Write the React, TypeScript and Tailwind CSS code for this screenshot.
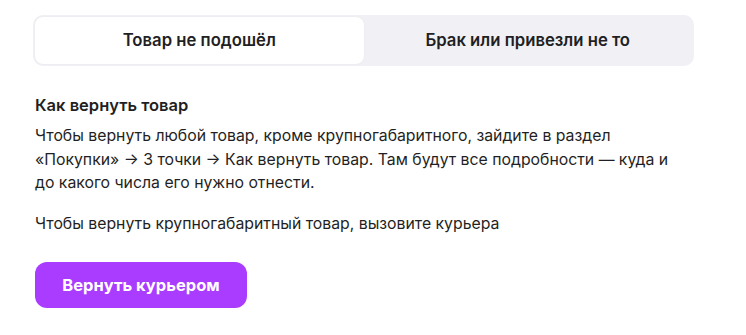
export default function App() {
  return (
    <div className="min-h-[335px] bg-white pt-[15px] pl-[33px] font-['Inter',sans-serif] text-[#1f1f24]">
      <div className="w-[661px]">
        {/* Tabs */}
        <div className="flex rounded-[10px] bg-[#f0f0f5] p-[2px]">
          <button className="h-[47px] flex-1 rounded-[8px] bg-white text-[16.7px] font-semibold shadow-[0_0_2px_rgba(0,0,0,0.06)]">
            Товар не подошёл
          </button>
          <button className="h-[47px] flex-1 rounded-[8px] text-[16.7px] font-semibold">
            Брак или привезли не то
          </button>
        </div>

        <div className="pl-[2px] pt-[28px]">
          <h3 className="text-[16.5px] font-semibold leading-[22px]">Как вернуть товар</h3>
          <p className="mt-[8px] text-[15.8px] leading-[23.5px]">
            Чтобы вернуть любой товар, кроме крупногабаритного, зайдите в раздел
            <br />
            «Покупки» → 3 точки → Как вернуть товар. Там будут все подробности — куда и
            <br />
            до какого числа его нужно отнести.
          </p>
          <p className="mt-[17px] text-[15.8px] leading-[23.5px]">
            Чтобы вернуть крупногабаритный товар, вызовите курьера
          </p>
          <button className="mt-[27px] h-[46px] w-[212px] rounded-[12px] bg-[#a93cff] text-[16.5px] font-bold text-white">
            Вернуть курьером
          </button>
        </div>
      </div>
    </div>
  );
}
